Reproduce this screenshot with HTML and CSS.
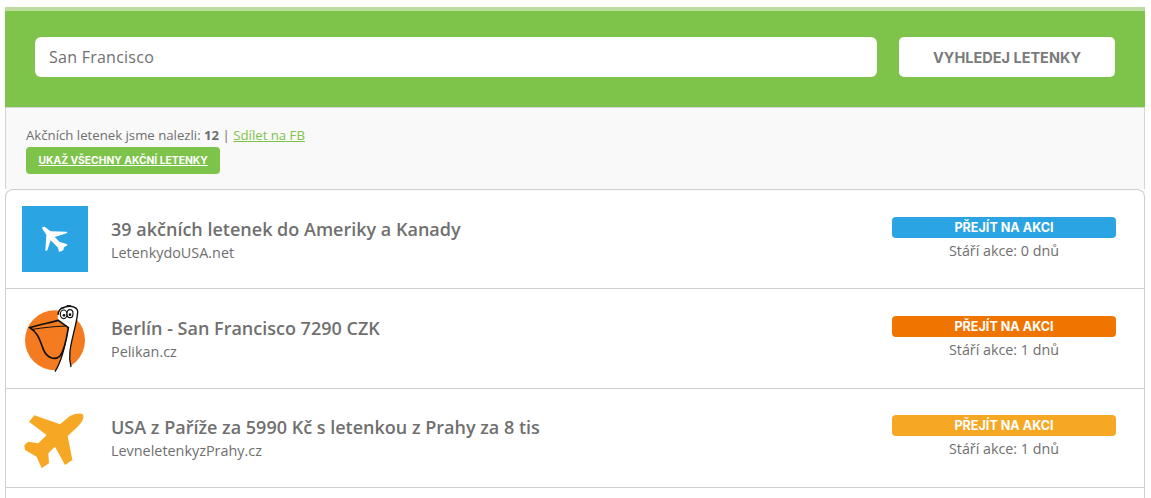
FILE: index.html
```html
<!DOCTYPE html>
<html lang="cs">
    <head>
        <meta charset="UTF-8">
        <meta name="viewport" content="width=device-width, initial-scale=1.0">
        <title>Akční letenky</title>
        <link rel="stylesheet" href="styles.css">
    </head>
    <body>
        <div class="wrap">
            <form class="search">
                <input class="search-input" type="text" value="San Francisco">
                <button class="search-btn" type="button">VYHLEDEJ LETENKY</button>
            </form>

            <div class="summary">
                <p class="count">Akčních letenek jsme nalezli: <b>12</b> | <a href="#">Sdílet na FB</a></p>
                <a class="show-all" href="#">UKAŽ VŠECHNY AKČNÍ LETENKY</a>
            </div>

            <div class="list">
                <div class="deal">
                    <div class="logo logo-blue">
                        <svg width="26" height="26" viewBox="84 82 78 78">
                            <path fill="#fff" d="M85 85 L92 84 L110 98 L158 99 L160 103 L122 115 L137 130 L158 136 L160 140 L150 146 L148 155 L135 160 L132 147 L110 125 L100 155 L94 157 L97 108 L85 90 Z"/>
                        </svg>
                    </div>
                    <div class="info">
                        <h2>39 akčních letenek do Ameriky a Kanady</h2>
                        <p>LetenkydoUSA.net</p>
                    </div>
                    <div class="action">
                        <a class="go go-blue" href="#">PŘEJÍT NA AKCI</a>
                        <p>Stáří akce: 0 dnů</p>
                    </div>
                </div>

                <div class="deal">
                    <div class="logo">
                        <svg class="logo-art" width="66" height="66" viewBox="21 22 198 198">
                            <circle cx="120" cy="128" r="90" fill="#f47b20"/>
                            <path fill="#fff" d="M120 222 C140 190 150 150 158 95 L130 68 C125 50 130 32 150 28 C170 22 190 30 188 45 C185 80 170 120 165 160 C163 185 165 200 168 208 C155 218 135 222 120 222 Z"/>
                            <path fill="none" stroke="#111" stroke-width="4" d="M120 222 C140 190 150 150 158 95 M168 208 C163 190 163 175 165 160 C170 120 185 80 188 45 C190 30 170 22 150 28 C138 30 130 40 129 52"/>
                            <path fill="#f47b20" stroke="#111" stroke-width="5" d="M45 90 C70 82 105 75 130 68 L160 90 C155 120 150 155 135 175 C120 190 95 180 85 155 C75 130 70 105 45 90 Z"/>
                            <path fill="none" stroke="#111" stroke-width="3" d="M52 95 C85 90 120 86 155 85"/>
                            <ellipse cx="146" cy="50" rx="10" ry="13" fill="#fff" stroke="#111" stroke-width="3.5"/>
                            <ellipse cx="165" cy="48" rx="9" ry="12" fill="#fff" stroke="#111" stroke-width="3.5"/>
                            <circle cx="147" cy="53" r="4" fill="#111"/>
                            <circle cx="165" cy="51" r="4" fill="#111"/>
                            <path fill="none" stroke="#111" stroke-width="4" d="M136 33 L148 30 M155 24 L168 25"/>
                        </svg>
                    </div>
                    <div class="info">
                        <h2>Berlín - San Francisco 7290 CZK</h2>
                        <p>Pelikan.cz</p>
                    </div>
                    <div class="action">
                        <a class="go go-orange" href="#">PŘEJÍT NA AKCI</a>
                        <p>Stáří akce: 1 dnů</p>
                    </div>
                </div>

                <div class="deal">
                    <div class="logo">
                        <svg width="66" height="66" viewBox="21 15 198 198">
                            <path fill="#f6a723" d="M42 65 L58 46 L135 73 L165 48 C185 38 205 38 205 48 C207 62 190 80 175 92 L158 108 L172 180 L150 195 L120 140 L100 160 L102 190 L80 205 L65 170 L30 150 L28 135 L40 125 L70 130 L95 105 Z"/>
                        </svg>
                    </div>
                    <div class="info">
                        <h2>USA z Paříže za 5990 Kč s letenkou z Prahy za 8 tis</h2>
                        <p>LevneletenkyzPrahy.cz</p>
                    </div>
                    <div class="action">
                        <a class="go go-yellow" href="#">PŘEJÍT NA AKCI</a>
                        <p>Stáří akce: 1 dnů</p>
                    </div>
                </div>

                <div class="deal-end"></div>
            </div>
        </div>
    </body>
</html>
```

FILE: styles.css
```css
html, body {
    height: 498px;
    overflow: hidden;
}
body {
    margin: 0;
    background: #fff;
    font-family: "Open Sans", Arial, sans-serif;
    color: #6f6f6f;
}
p {
    margin: 0;
}
.wrap {
    margin: 7px 6px 0 5px;
}

/* search */
.search {
    display: flex;
    gap: 22px;
    padding: 26px 30px 30px 30px;
    background: #7ec34a;
    border-top: 4px solid #bcdca0;
}
.search-input {
    flex: 1;
    min-width: 0;
    height: 40px;
    box-sizing: border-box;
    padding: 0 14px;
    border: none;
    border-radius: 6px;
    background: #fff;
    font-family: "Open Sans", Arial, sans-serif;
    font-size: 16px;
    letter-spacing: 0.25px;
    color: #6f6f6f;
}
.search-btn {
    width: 216px;
    height: 40px;
    border: none;
    border-radius: 5px;
    background: #fff;
    font-family: Inter, Arial, sans-serif;
    font-weight: 700;
    font-size: 14.5px;
    color: #7b7b7b;
}

/* summary */
.summary {
    height: 82px;
    box-sizing: border-box;
    padding: 19px 20px 0 20px;
    background: #f9f9f9;
    border-top: 1px solid #d5d5d5;
    border-left: 1px solid #d5d5d5;
    border-right: 1px solid #d5d5d5;
}
.count {
    font-size: 13.2px;
    line-height: 17px;
}
.count a {
    color: #7ec34a;
}
.show-all {
    display: inline-block;
    margin-top: 3px;
    padding: 0 12.5px;
    height: 27px;
    line-height: 27px;
    border-radius: 4px;
    background: #7ec34a;
    color: #fff;
    font-family: Inter, Arial, sans-serif;
    font-weight: 700;
    font-size: 10.3px;
}

/* list */
.list {
    border: 1px solid #cfcfcf;
    border-bottom: none;
    border-radius: 8px 8px 0 0;
    background: #fff;
}
.deal {
    display: flex;
    align-items: center;
    height: 98.3px;
    padding: 0 28px 0 16px;
    border-bottom: 1px solid #cfcfcf;
}
.deal-end {
    height: 10px;
}
.logo {
    flex: none;
    width: 66px;
    height: 66px;
    display: flex;
    align-items: center;
    justify-content: center;
}
.logo-blue {
    background: #2aa4e2;
}
.logo-art {
    overflow: visible;
}
.info {
    flex: 1;
    padding-left: 23px;
}
.info h2 {
    margin: 0 0 3px 0;
    font-size: 18px;
    line-height: 24px;
    font-weight: 600;
    color: #707070;
}
.info p {
    font-size: 14.4px;
    line-height: 18px;
}
.action {
    flex: none;
    width: 224px;
    text-align: center;
    font-size: 14.3px;
    margin-top: 0.4px;
}
.action p {
    line-height: 22px;
    margin-top: 2px;
}
.go {
    display: block;
    height: 21px;
    line-height: 21px;
    border-radius: 4px;
    color: #fff;
    font-family: Inter, Arial, sans-serif;
    font-weight: 700;
    font-size: 12.6px;
    text-decoration: none;
}
.go-blue {
    background: #2aa4e2;
}
.go-orange {
    background: #f07400;
}
.go-yellow {
    background: #f6a723;
}
```
